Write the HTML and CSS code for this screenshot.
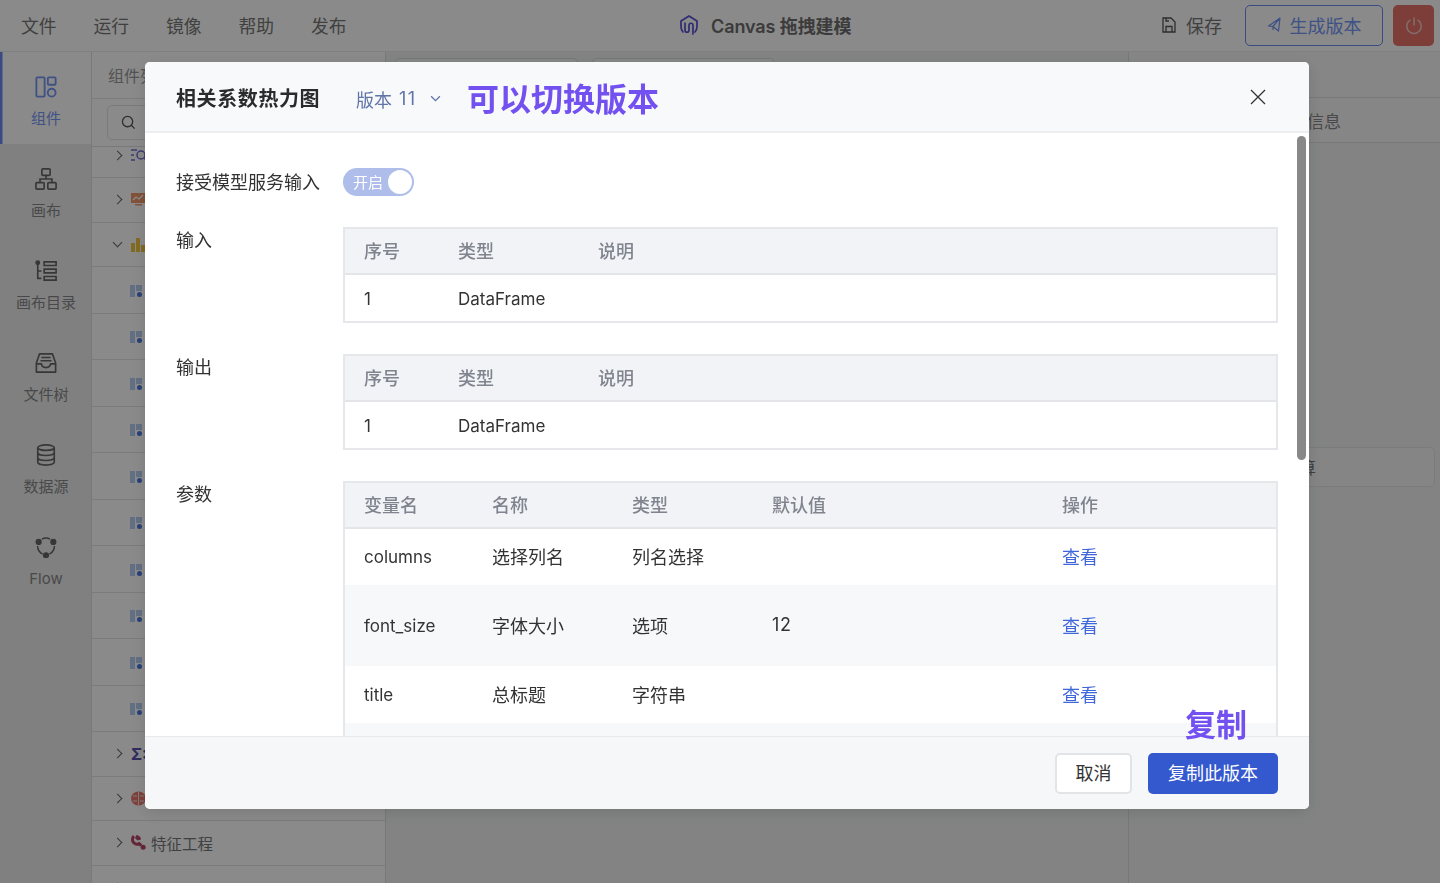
FILE: index.html
```html
<!DOCTYPE html>
<html lang="zh-CN">
<head>
<meta charset="utf-8">
<title>Canvas 拖拽建模</title>
<link rel="stylesheet" href="styles.css">
</head>
<body>
<div class="app">
  <header class="topbar">
    <nav class="menu"><span>文件</span><span>运行</span><span>镜像</span><span>帮助</span><span>发布</span></nav>
    <div class="brand">
      <svg class="brand-logo" viewBox="0 0 18 20" fill="none" stroke="#5a4fd0" stroke-width="1.700" stroke-linecap="round" stroke-linejoin="round"><path d="M3 17C1.500 15.500 1 13.500 1 11.500V6l8-5 8 5v5.500c0 2-.5 4-2 5.500"/><path d="M5 8v7c0 3 4 3 4 0v-4.500c0-3 4-3 4 0V19"/></svg>
      <strong>Canvas 拖拽建模</strong>
    </div>
    <div class="actions">
      <span class="save">
        <svg class="save-icon" viewBox="0 0 14 16" fill="none" stroke="#555" stroke-width="1.300"><path d="M1 1h8l4 4v10H1z"/><path d="M4 15V9.500h6V15M4 1v3h3"/></svg>
        保存
      </span>
      <button class="btn-outline">
        <svg class="send-icon" viewBox="0 0 14 15" fill="none" stroke="#7596f5" stroke-width="1.200" stroke-linejoin="round"><path d="M13 1 1.500 9 6 9.500l5.500 4.500zM13 1 6 9.500V13"/></svg>
        生成版本
      </button>
      <button class="btn-power" aria-label="power">
        <svg viewBox="0 0 20 20" fill="none" stroke="#f3c9c4" stroke-width="1.500" stroke-linecap="round"><path d="M10 2v7"/><path d="M6 4.200a7.200 7.200 0 1 0 8 0"/></svg>
      </button>
    </div>
  </header>
  <div class="main">
    <aside class="sidebar">
      <div class="side-item active">
        <svg viewBox="0 0 24 24" fill="none" stroke="#7596f5" stroke-width="2"><rect x="1.500" y="1.500" width="9" height="21" rx="1"/><rect x="14" y="1.500" width="8.500" height="8" rx="1"/><circle cx="18.200" cy="18.200" r="4.300"/></svg>
        <span>组件</span>
      </div>
      <div class="side-item">
        <svg viewBox="0 0 24 24" fill="none" stroke="#666" stroke-width="1.800"><rect x="7.500" y="1" width="9" height="7" rx="1"/><rect x="1" y="16" width="9" height="7" rx="1"/><rect x="14" y="16" width="9" height="7" rx="1"/><path d="M12 8v4M5.500 16v-4h13v4"/></svg>
        <span>画布</span>
      </div>
      <div class="side-item">
        <svg viewBox="0 0 24 24" fill="none" stroke="#666" stroke-width="1.800"><circle cx="3" cy="3" r="1.800" fill="#666"/><path d="M3 4v16h4M3 12h4M10 2h13v4H10zM10 10h13v4H10zM10 18h13v4H10z"/></svg>
        <span>画布目录</span>
      </div>
      <div class="side-item">
        <svg viewBox="0 0 24 24" fill="none" stroke="#666" stroke-width="1.800" stroke-linejoin="round"><path d="M1.500 12 5 2h14l3.500 10v10h-21z"/><path d="M1.500 13H7c.5 3 2 4 5 4s4.500-1 5-4h5.500M7 6h10M6 9.500h12"/></svg>
        <span>文件树</span>
      </div>
      <div class="side-item">
        <svg viewBox="0 0 24 24" fill="none" stroke="#666" stroke-width="1.800"><ellipse cx="12" cy="4" rx="9" ry="3"/><path d="M3 4v16c0 1.700 4 3 9 3s9-1.300 9-3V4M3 9.500c0 1.700 4 3 9 3s9-1.300 9-3M3 15c0 1.700 4 3 9 3s9-1.300 9-3"/></svg>
        <span>数据源</span>
      </div>
      <div class="side-item">
        <svg viewBox="0 0 24 24" fill="none" stroke="#666" stroke-width="1.600"><circle cx="4" cy="6.500" r="2.600" fill="#666"/><circle cx="20" cy="6.500" r="2.600" fill="#666"/><circle cx="12" cy="21" r="2.600" fill="#666"/><path d="M7.500 3.500a9.500 9.500 0 0 1 9 0M2.800 11a10 10 0 0 0 5.500 8.800M21.200 11a10 10 0 0 1-5.500 8.800"/></svg>
        <span>Flow</span>
      </div>
    </aside>
    <section class="panel">
      <div class="panel-title">组件列表</div>
      <div class="panel-search">
        <div class="search-box">
          <svg viewBox="0 0 16 16" fill="none" stroke="#555" stroke-width="1.400"><circle cx="7" cy="7" r="5.500"/><path d="m11 11 3.500 3.500"/></svg>
        </div>
      </div>
      <div class="tree">
        <div class="row row-clip"><i class="chev"></i><svg class="row-icon" viewBox="0 0 15 15" fill="none" stroke="#6d6fd0" stroke-width="1.500"><path d="M0 2h6M0 7h3M0 12h4"/><circle cx="10" cy="7" r="4"/><path d="m13 10 2 2"/></svg></div>
        <div class="row"><i class="chev"></i><svg class="row-icon" viewBox="0 0 15 15"><rect y="1" width="15" height="10" fill="#f2976a"/><path d="m2 8 3-3 3 2 4-4" fill="none" stroke="#fff" stroke-width="1.200"/><rect x="4" y="12" width="7" height="1.500" fill="#f2976a"/></svg></div>
        <div class="row"><i class="chev down"></i><svg class="row-icon" viewBox="0 0 15 15" fill="#f0c53f"><rect y="6" width="4" height="9"/><rect x="5" y="1" width="4" height="14"/><rect x="10" y="8" width="4" height="7"/></svg></div>
        <div class="row child"><b class="leaf"></b></div>
        <div class="row child"><b class="leaf"></b></div>
        <div class="row child"><b class="leaf"></b></div>
        <div class="row child"><b class="leaf"></b></div>
        <div class="row child"><b class="leaf"></b></div>
        <div class="row child"><b class="leaf"></b></div>
        <div class="row child"><b class="leaf"></b></div>
        <div class="row child"><b class="leaf"></b></div>
        <div class="row child"><b class="leaf"></b></div>
        <div class="row child"><b class="leaf"></b></div>
        <div class="row"><i class="chev"></i><span class="sigma">Σ:</span></div>
        <div class="row"><i class="chev"></i><svg class="row-icon" viewBox="0 0 15 15" fill="#e9796e"><ellipse cx="7.500" cy="7.500" rx="7.500" ry="7"/><path d="M7.500 1v13M2 5h4M2 10h4M9 5h4M9 10h4" stroke="#f4e4e0" fill="none"/></svg></div>
        <div class="row"><i class="chev"></i><svg class="row-icon" viewBox="0 0 15 15"><path d="M3 1.200C1 3 1 6 2.800 7.800c1.500 1.500 3.700 1.800 5.400.8l2 2" fill="none" stroke="#b8466a" stroke-width="3"/><path d="M5.500 0 4 3l2.500 2.500L10 4.500C10 2 8 .2 5.500 0z" fill="#b8466a"/><circle cx="12.200" cy="12.200" r="2.500" fill="#b8466a"/></svg><span class="row-text">特征工程</span></div>
        <div class="row"><i class="chev"></i></div>
      </div>
    </section>
    <section class="canvas">
      <div class="canvas-tabs"><span class="tab"></span><span class="tab"></span></div>
    </section>
    <aside class="info">
      <div class="info-top"></div>
      <div class="info-head">组件信息</div>
      <div class="info-body"><div class="info-btn">开始计算</div></div>
    </aside>
  </div>
</div>

<div class="overlay">
  <div class="modal">
    <header class="modal-head">
      <h2>相关系数热力图</h2>
      <span class="version">版本<span class="ver-num">11</span>
        <svg viewBox="0 0 12 8" fill="none" stroke="#5f74a8" stroke-width="1.500"><path d="m1 1.500 5 5 5-5"/></svg>
      </span>
      <span class="note">可以切换版本</span>
      <svg class="close" viewBox="0 0 16 16" fill="none" stroke="#333" stroke-width="1.300"><path d="m1 1 14 14M15 1 1 15"/></svg>
    </header>
    <div class="modal-body">
      <div class="form-row toggle-row">
        <label>接受模型服务输入</label>
        <div class="toggle"><span>开启</span><i></i></div>
      </div>
      <div class="form-row">
        <label>输入</label>
        <div class="tbl">
          <table class="t-io">
            <thead><tr><th>序号</th><th>类型</th><th>说明</th></tr></thead>
            <tbody><tr><td class="lat">1</td><td class="lat">DataFrame</td><td></td></tr></tbody>
          </table>
        </div>
      </div>
      <div class="form-row">
        <label>输出</label>
        <div class="tbl">
          <table class="t-io">
            <thead><tr><th>序号</th><th>类型</th><th>说明</th></tr></thead>
            <tbody><tr><td class="lat">1</td><td class="lat">DataFrame</td><td></td></tr></tbody>
          </table>
        </div>
      </div>
      <div class="form-row">
        <label>参数</label>
        <div class="tbl">
          <table class="t-params">
            <thead><tr><th>变量名</th><th>名称</th><th>类型</th><th>默认值</th><th>操作</th></tr></thead>
            <tbody>
              <tr class="r-short"><td class="lat">columns</td><td>选择列名</td><td>列名选择</td><td></td><td><a>查看</a></td></tr>
              <tr class="r-tall"><td class="lat">font_size</td><td>字体大小</td><td>选项</td><td class="num">12</td><td><a>查看</a></td></tr>
              <tr class="r-short"><td class="lat">title</td><td>总标题</td><td>字符串</td><td></td><td><a>查看</a></td></tr>
              <tr class="r-short r-alt"><td></td><td></td><td></td><td></td><td></td></tr>
            </tbody>
          </table>
        </div>
      </div>
      <div class="scroll-thumb"></div>
    </div>
    <footer class="modal-foot">
      <button class="btn-cancel">取消</button>
      <button class="btn-primary">复制此版本</button>
    </footer>
    <span class="note note-copy">复制</span>
  </div>
</div>
</body>
</html>
```

FILE: styles.css
```css
* { box-sizing: border-box; }
html, body { margin: 0; height: 100%; overflow: hidden; }
body {
  font-family: Inter, "Noto Sans CJK SC", "Liberation Sans", sans-serif;
  font-size: 18px;
  color: #333;
  background: #fff;
}
button { font: inherit; cursor: pointer; }

.app { height: 883px; display: flex; flex-direction: column; overflow: hidden; }

/* top bar */
.topbar {
  height: 52px; flex: none; display: flex; align-items: center;
  padding-left: 21px; background: #fff; border-bottom: 1px solid #ececec;
}
.menu { display: flex; gap: 37px; width: 326px; flex: none; color: #777; font-size: 17.750px; white-space: nowrap; padding-bottom: 2px; }
.brand { margin-left: 333px; display: flex; align-items: center; gap: 13px; color: #6d6d6d; font-size: 18px; padding-bottom: 2px; }
.brand strong { font-weight: 600; letter-spacing: -.1px; }
.brand-logo { width: 18px; height: 20px; display: block; }
.actions { margin-left: auto; display: flex; align-items: center; padding-right: 6px; }
.save { display: flex; align-items: center; gap: 10px; color: #777; margin-right: 23px; padding-bottom: 2px; }
.save-icon { width: 14px; height: 16px; }
.btn-outline {
  width: 138px; height: 41px; display: flex; align-items: center; justify-content: center; gap: 9px;
  background: #fff; border: 1.500px solid #6a8bf0; border-radius: 5px; color: #7596f5;
  padding: 0 0 2px; margin-right: 10px;
}
.send-icon { width: 14px; height: 15px; }
.btn-power {
  width: 41px; height: 41px; border: 0; border-radius: 5px; background: #e8726a; padding: 0;
  display: flex; align-items: center; justify-content: center;
}
.btn-power svg { width: 20px; height: 20px; }

.main { flex: 1; display: flex; min-height: 0; }

/* left rail */
.sidebar { width: 92px; flex: none; background: #eceded; border-right: 1px solid #dfe0e2; padding-left: 1px; }
.side-item {
  height: 92px; display: flex; flex-direction: column; align-items: center; justify-content: flex-start;
  padding-top: 24px; gap: 10px; color: #888; font-size: 15px; line-height: 22px;
}
.side-item svg { width: 22px; height: 22px; flex: none; }
.side-item.active { background: #fff; box-shadow: inset 2.500px 0 0 #6a8bf0; color: #7596f5; margin-left: -1px; padding-left: 1px; }

/* component panel */
.panel { width: 294px; flex: none; background: #fff; border-right: 1px solid #dedede; display: flex; flex-direction: column; }
.panel-title { height: 47px; flex: none; display: flex; align-items: center; padding-left: 16px; color: #999; font-size: 16px; border-bottom: 1px solid #e6e6e6; }
.panel-search { height: 47px; flex: none; padding: 6px 0 0 15px; }
.search-box { width: 260px; height: 35px; border: 1px solid #e2e2e2; border-radius: 5px; display: flex; align-items: center; padding-left: 13px; }
.search-box svg { width: 15px; height: 15px; }
.tree { flex: 1; border-top: 1px solid #e0e0e0; overflow: hidden; }
.row { height: 44.500px; display: flex; align-items: center; padding-left: 22px; border-bottom: 1.500px solid #e3e3e3; }
.row-clip { height: 31px; align-items: flex-start; padding-top: 1px; }
.row-clip .chev { margin-top: 4px; }
.row.child { height: 46.500px; padding-left: 38px; }
.chev {
  width: 7px; height: 7px; border-top: 1.500px solid #666; border-right: 1.500px solid #666;
  transform: rotate(45deg); margin-right: 10px; flex: none;
}
.chev.down { transform: rotate(135deg); margin-top: -3px; }
.row-icon { width: 15px; height: 15px; flex: none; }
.row-text { margin-left: 5px; color: #777; font-size: 15.500px; }
.sigma { font-weight: 700; color: #5a4fb0; font-size: 16px; line-height: 1; }
.leaf {
  display: block; width: 12px; height: 12px; position: relative; top: 1px;
  background: linear-gradient(90deg, transparent 0 6px, #b6cdf0 6px) top / 100% 6px no-repeat,
              linear-gradient(#b6cdf0, #b6cdf0) left / 5px 100% no-repeat;
}
.leaf::after {
  content: ""; position: absolute; right: 0; bottom: 0; width: 5px; height: 5px;
  border-radius: 50%; background: #4a78e0;
}

/* canvas */
.canvas { flex: 1; background: #f2f3f4; padding: 6px 0 0 9px; }
.canvas-tabs { display: flex; gap: 14px; }
.tab { width: 183px; height: 30px; background: #fafafa; border: 1px solid #dcdcdc; border-radius: 5px; }

/* right info panel */
.info { width: 312px; flex: none; background: #f7f7f7; border-left: 1px solid #dedede; display: flex; flex-direction: column; }
.info-top { height: 46px; flex: none; border-bottom: 1px solid #e0e0e0; }
.info-head { height: 45px; flex: none; display: flex; align-items: center; justify-content: flex-end; padding-right: 99px; color: #888; font-size: 17px; border-bottom: 1px solid #e0e0e0; }
.info-body { flex: 1; padding: 304px 5px 0 4px; background: #f2f3f4; }
.info-btn { height: 40px; background: #f6f6f6; border: 1px solid #e4e4e4; border-radius: 5px; display: flex; align-items: center; justify-content: center; color: #777; font-size: 16px; }

/* dialog */
.overlay {
  position: fixed; inset: 0; background: rgba(0, 0, 0, .46); padding: 62px 0 0 145px;
}
.modal {
  position: relative; width: 1164px; height: 747px; background: #fff; border-radius: 5px;
  display: flex; flex-direction: column; overflow: hidden;
  box-shadow: 0 4px 16px rgba(0, 0, 0, .12);
}
.modal-head {
  height: 71px; flex: none; display: flex; align-items: center; padding-left: 31px; background: #f8f9fb;
  border-bottom: 2px solid #eceef1; position: relative;
}
.modal-head h2 { margin: 0; font-size: 20px; font-weight: 600; color: #2b2b2b; letter-spacing: .6px; width: 180px; flex: none; line-height: 1; position: relative; top: 2px; }
.version { display: flex; align-items: center; color: #5f74a8; width: 111px; flex: none; position: relative; top: 2px; white-space: nowrap; }
.ver-num { margin-left: 7px; letter-spacing: 1.500px; }
.version svg { width: 11px; height: 7px; margin-left: 13px; }
.note { font-size: 32px; line-height: 1; font-weight: 600; color: #7350f0; position: relative; top: 3px; }
.note-copy { position: absolute; right: 62px; top: 647px; font-size: 31px; }
.close { position: absolute; left: 1105px; top: 27px; width: 16px; height: 16px; }

.modal-body { flex: 1; min-height: 0; overflow: hidden; padding: 35px 31px 0; position: relative; }
.form-row { display: grid; grid-template-columns: 167px 1fr; margin-bottom: 31px; }
.form-row label { line-height: 26px; padding-top: 1px; color: #333; }
.toggle-row { margin-bottom: 31px; align-items: center; }
.toggle {
  width: 71px; height: 28px; border-radius: 14px; background: #aebde9; display: flex; align-items: center;
  justify-content: space-between; padding: 0 2px 0 10px; color: #fff; font-size: 15px;
}
.toggle span { position: relative; top: -1px; }
.toggle i { width: 24px; height: 24px; border-radius: 50%; background: #fff; display: block; }

.tbl { border: 2px solid #e6e7ea; }
table { width: 100%; border-collapse: collapse; table-layout: fixed; }
th {
  height: 45px; padding: 0 0 2px 19px; text-align: left; font-weight: 500; color: #80848e;
  background: #f2f3f7; border-bottom: 2px solid #e4e5e9;
}
td { height: 47px; padding: 0 0 0 19px; color: #333; }
td.lat { font-size: 17px; padding-top: 2px; }
td.num { letter-spacing: .8px; }
.t-io th:nth-child(1) { width: 113px; }
.t-io th:nth-child(2) { width: 140px; }
.t-params th:nth-child(1) { width: 147px; }
.t-params th:nth-child(2),
.t-params th:nth-child(3) { width: 140px; }
.t-params th:nth-child(4) { width: 290px; }
.t-params th:nth-child(n+2), .t-params td:nth-child(n+2) { padding-left: 0; }
.t-io th:nth-child(n+2), .t-io td:nth-child(n+2) { padding-left: 0; }
.r-short td { height: 57px; padding-bottom: 2px; }
.r-tall td { height: 81px; padding-bottom: 2px; background: #f7f8fa; }
.r-alt td { background: #f7f8fa; }
a { color: #3f67d9; }

.scroll-thumb {
  position: absolute; top: 3px; right: 3px; width: 9px; height: 324px; border-radius: 5px; background: #888;
}

.modal-foot {
  height: 73px; flex: none; display: flex; justify-content: flex-end; align-items: flex-start; gap: 16px;
  padding: 16px 31px 0; background: #f6f7f9; border-top: 1px solid #e8e9eb;
}
.btn-cancel { width: 77px; height: 41px; background: #fff; border: 2px solid #e3e4e7; border-radius: 5px; color: #333; padding: 0 0 3px; }
.btn-primary { width: 130px; height: 41px; background: #3458cd; border: 0; border-radius: 5px; color: #fff; padding: 0 0 3px; }
```
